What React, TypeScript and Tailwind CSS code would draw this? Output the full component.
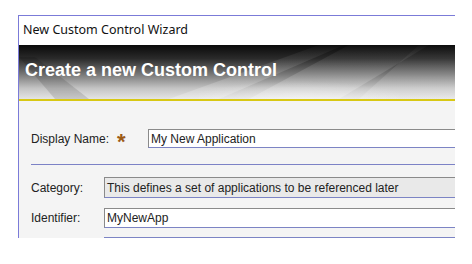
import React from "react";

const Input = ({ value, gray, h }: { value?: string; gray?: boolean; h: string }) => (
  <div
    className={`flex-1 flex items-center pl-[2px] border-t border-l border-b border-t-[#8a8a8a] border-l-[#8a8a8a] border-b-[#7c84c4] text-[12px] text-[#222] whitespace-nowrap ${h} ${
      gray ? "bg-[#e9e9e9]" : "bg-white"
    }`}
    style={{ fontFamily: '"Liberation Sans", Arial, sans-serif' }}
  >
    {value}
  </div>
);

export default function App() {
  return (
    <div className="w-[472px] h-[264px] bg-white pt-[15px] pl-[18px] overflow-hidden">
      <div className="w-[437px] h-[223px] border-t border-l border-[#7b7bd8] flex flex-col overflow-hidden">
        <div
          className="h-[29px] flex items-center pl-[4px] text-[12.5px] text-[#111] bg-white shrink-0"
          style={{ fontFamily: '"Noto Sans", "Open Sans", sans-serif' }}
        >
          New Custom Control Wizard
        </div>
        <div className="relative h-[54px] shrink-0 bg-[linear-gradient(to_bottom,#0a0a0a_0%,#2a2a2a_25%,#7a7a7a_55%,#c4c4c4_80%,#e4e4e4_100%)] overflow-hidden">
          <svg className="absolute inset-0" width="436" height="54" viewBox="0 0 436 54">
            <defs>
              <linearGradient id="g1" x1="0" y1="0" x2="0" y2="1">
                <stop offset="0" stopColor="#ffffff" stopOpacity="0.03" />
                <stop offset="1" stopColor="#ffffff" stopOpacity="0.5" />
              </linearGradient>
              <radialGradient id="r1" cx="0.5" cy="1" r="0.6">
                <stop offset="0" stopColor="#ffffff" stopOpacity="0.85" />
                <stop offset="1" stopColor="#ffffff" stopOpacity="0" />
              </radialGradient>
            </defs>
            <polygon points="0,12 36,54 70,54 16,12" fill="#000" opacity="0.12" />
            <polygon points="150,54 300,0 325,0 200,54" fill="url(#g1)" opacity="0.5" />
            <polygon points="230,54 330,0 410,0 320,54" fill="url(#g1)" opacity="0.5" />
            <polygon points="340,54 400,0 436,0 436,54" fill="url(#g1)" opacity="0.4" />
            <rect x="180" y="20" width="200" height="40" fill="url(#r1)" opacity="0.6" />
          </svg>
          <div
            className="relative h-full flex items-center pl-[6px] pb-[3px] text-[18px] font-bold text-white"
            style={{ fontFamily: '"Liberation Sans", Arial, sans-serif' }}
          >
            Create a new Custom Control
          </div>
        </div>
        <div className="h-[2px] bg-[#d8c814] shrink-0" />
        <div
          className="flex-1 bg-[#f4f4f4] flex flex-col pl-[12px] text-[12px] text-[#222]"
          style={{ fontFamily: '"Liberation Sans", Arial, sans-serif' }}
        >
          <div className="mt-[28px] flex items-center">
            <div className="w-[86px]">Display Name:</div>
            <div className="w-[31px] h-[19px] text-[22px] leading-[26px] font-bold text-[#9c5a16]">*</div>
            <Input value="My New Application" h="h-[19px]" />
          </div>
          <div className="mt-[16px] h-px bg-[#7c82c6]" />
          <div className="mt-[12px] flex items-center">
            <div className="w-[73px]">Category:</div>
            <Input value="This defines a set of applications to be referenced later" gray h="h-[21px]" />
          </div>
          <div className="mt-[10px] flex items-center">
            <div className="w-[73px]">Identifier:</div>
            <Input value="MyNewApp" h="h-[20px]" />
          </div>
          <div className="mt-[9px] flex">
            <div className="w-[73px]" />
            <div className="flex-1 h-[4px] border-t border-[#7c84c4] bg-white" />
          </div>
        </div>
      </div>
    </div>
  );
}
